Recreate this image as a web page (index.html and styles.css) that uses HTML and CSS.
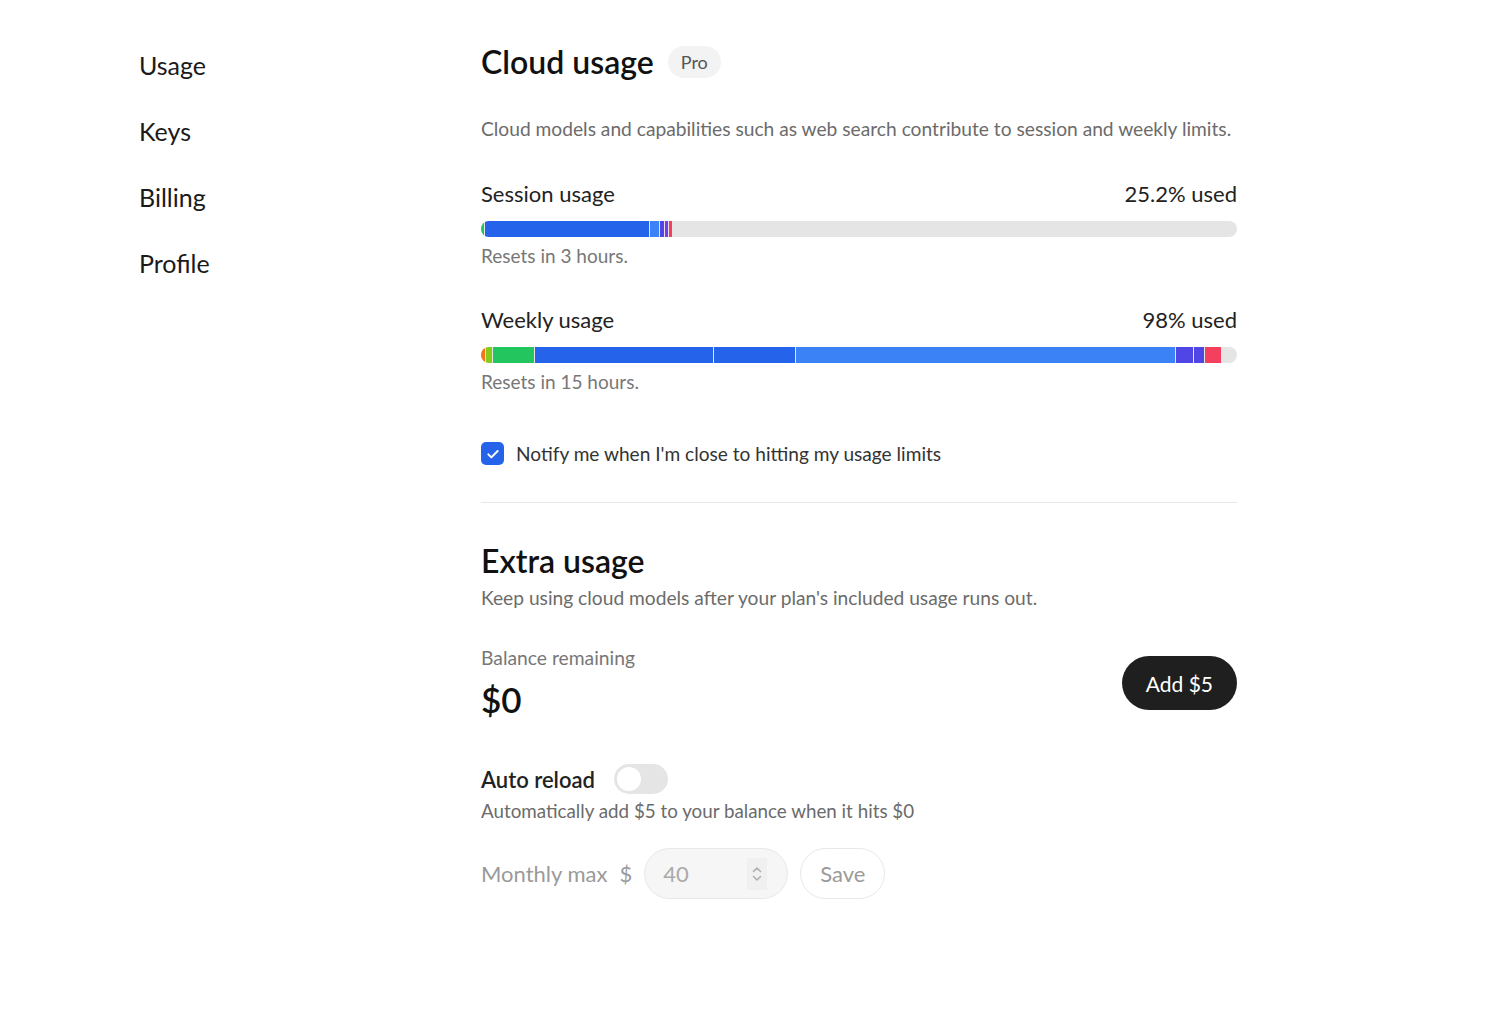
FILE: index.html
```html
<!DOCTYPE html>
<html lang="en">
<head>
    <meta charset="UTF-8">
    <title>Usage</title>
    <link rel="stylesheet" href="styles.css">
</head>
<body>
    <div class="pagina">
        <nav class="menu">
            <a href="#">Usage</a>
            <a href="#">Keys</a>
            <a href="#">Billing</a>
            <a href="#">Profile</a>
        </nav>

        <main class="contenido">
            <div class="titulo">
                <h1>Cloud usage</h1>
                <span class="insignia">Pro</span>
            </div>
            <p class="descripcion">Cloud models and capabilities such as web search contribute to session and weekly limits.</p>

            <section class="uso">
                <div class="uso-cabecera">
                    <span>Session usage</span>
                    <span>25.2% used</span>
                </div>
                <div class="barra">
                    <span class="verde" style="width: 3px"></span>
                    <span class="azul" style="width: 164px"></span>
                    <span class="celeste" style="width: 9px"></span>
                    <span class="indigo" style="width: 4px"></span>
                    <span class="violeta" style="width: 3px"></span>
                    <span class="rojo" style="width: 3px"></span>
                </div>
                <p class="nota">Resets in 3 hours.</p>
            </section>

            <section class="uso">
                <div class="uso-cabecera">
                    <span>Weekly usage</span>
                    <span>98% used</span>
                </div>
                <div class="barra">
                    <span class="naranja" style="width: 4px"></span>
                    <span class="lima" style="width: 6px"></span>
                    <span class="verde" style="width: 41px"></span>
                    <span class="azul" style="width: 178px"></span>
                    <span class="azul" style="width: 81px"></span>
                    <span class="celeste" style="width: 379px"></span>
                    <span class="indigo" style="width: 17px"></span>
                    <span class="indigo" style="width: 10px"></span>
                    <span class="rojo" style="width: 16px"></span>
                </div>
                <p class="nota">Resets in 15 hours.</p>
            </section>

            <label class="aviso">
                <span class="casilla">
                    <svg viewBox="0 0 24 24" width="16" height="16"><path d="M5 12.5l4.5 4.5L19 7.5" fill="none" stroke="#fff" stroke-width="3" stroke-linecap="round" stroke-linejoin="round"/></svg>
                </span>
                Notify me when I'm close to hitting my usage limits
            </label>

            <hr class="separador">

            <h2>Extra usage</h2>
            <p class="descripcion">Keep using cloud models after your plan's included usage runs out.</p>

            <div class="saldo">
                <div>
                    <p class="saldo-texto">Balance remaining</p>
                    <p class="saldo-valor">$0</p>
                </div>
                <button class="boton-negro">Add $5</button>
            </div>

            <div class="recarga">
                <span class="recarga-titulo">Auto reload</span>
                <span class="interruptor"><span></span></span>
            </div>
            <p class="descripcion recarga-texto">Automatically add $5 to your balance when it hits $0</p>

            <div class="maximo">
                <span>Monthly max</span>
                <span class="moneda">$</span>
                <div class="campo">
                    <span>40</span>
                    <span class="flechas">
                        <svg viewBox="0 0 16 24" width="16" height="24"><path d="M4.5 9.5L8 6l3.5 3.5M4.5 14.5L8 18l3.5-3.5" fill="none" stroke="#b0b0b0" stroke-width="1.6" stroke-linecap="round" stroke-linejoin="round"/></svg>
                    </span>
                </div>
                <button class="boton-claro">Save</button>
            </div>
        </main>
    </div>
</body>
</html>
```

FILE: styles.css
```css
body {
    font-family: "Lato", "Liberation Sans", sans-serif;
    background-color: #fff;
    color: #1a1a1a;
    margin: 0;
    padding: 0;
}

p {
    margin: 0;
}

.pagina {
    display: flex;
    padding: 44px 0 0 139px;
}

.menu {
    width: 342px;
    display: flex;
    flex-direction: column;
    gap: 36px;
    padding-top: 6px;
}

.menu a {
    color: #1a1a1a;
    text-decoration: none;
    font-size: 25px;
    line-height: 30px;
}

.contenido {
    width: 756px;
    display: flex;
    flex-direction: column;
}

.titulo {
    display: flex;
    align-items: center;
    gap: 14px;
}

h1, h2 {
    margin: 0;
    font-size: 32px;
    font-weight: 600;
    line-height: 36px;
    color: #111;
}

.insignia {
    background-color: #f3f3f3;
    color: #555;
    font-size: 18px;
    padding: 5px 13px;
    border-radius: 16px;
}

.descripcion {
    color: #6b6b6b;
    font-size: 19.2px;
    line-height: 26px;
}

.titulo + .descripcion {
    margin-top: 36px;
}

.uso {
    margin-top: 38px;
}

.uso + .uso {
    margin-top: 38px;
}

.uso-cabecera {
    display: flex;
    justify-content: space-between;
    font-size: 22px;
    line-height: 28px;
    color: #222;
}

.barra {
    display: flex;
    height: 16px;
    margin-top: 13px;
    background-color: #e5e5e5;
    border-radius: 8px;
    overflow: hidden;
    gap: 1px;
}

.barra span {
    height: 100%;
}

.verde { background-color: #22c55e; }
.azul { background-color: #2563eb; }
.celeste { background-color: #3b82f6; }
.indigo { background-color: #4f46e5; }
.violeta { background-color: #7c3aed; }
.rojo { background-color: #f43f5e; }
.naranja { background-color: #f97316; }
.lima { background-color: #84cc16; }

.nota {
    color: #777;
    font-size: 19px;
    line-height: 24px;
    margin-top: 7px;
}

.aviso {
    display: flex;
    align-items: center;
    gap: 12px;
    margin-top: 48px;
    font-size: 19.1px;
    color: #333;
}

.casilla {
    width: 23px;
    height: 23px;
    background-color: #2563eb;
    border-radius: 5px;
    display: flex;
    align-items: center;
    justify-content: center;
}

.separador {
    width: 100%;
    border: none;
    border-top: 1px solid #e8e8e8;
    margin: 37px 0 40px;
}

h2 + .descripcion {
    margin-top: 6px;
}

.saldo {
    display: flex;
    justify-content: space-between;
    align-items: center;
    margin-top: 34px;
}

.saldo-texto {
    color: #777;
    font-size: 19.3px;
    line-height: 26px;
}

.saldo-valor {
    font-size: 35px;
    font-weight: 600;
    line-height: 44px;
    margin-top: 6px;
    color: #111;
}

.boton-negro {
    font-family: inherit;
    background-color: #1f1f1f;
    color: white;
    font-size: 21px;
    border: none;
    border-radius: 27px;
    height: 54px;
    padding: 0 24px;
    cursor: pointer;
}

.recarga {
    display: flex;
    align-items: center;
    gap: 19px;
    margin-top: 43px;
}

.recarga-titulo {
    font-size: 22px;
    font-weight: 600;
    color: #222;
}

.recarga + .descripcion {
    margin-top: 4px;
}

.recarga-texto {
    font-size: 18.8px;
}

.interruptor {
    width: 54px;
    height: 30px;
    background-color: #e5e5e5;
    border-radius: 15px;
    position: relative;
}

.interruptor span {
    position: absolute;
    top: 3px;
    left: 3px;
    width: 24px;
    height: 24px;
    border-radius: 50%;
    background-color: white;
}

.maximo {
    display: flex;
    align-items: center;
    margin-top: 24px;
    font-size: 22px;
    color: #9a9a9a;
}

.moneda {
    margin: 0 12px 0 12px;
}

.campo {
    width: 144px;
    height: 51px;
    box-sizing: border-box;
    border: 1px solid #e8e8e8;
    background-color: #f6f6f6;
    border-radius: 26px;
    display: flex;
    align-items: center;
    justify-content: space-between;
    padding: 0 20px 0 18px;
    color: #aaa;
}

.flechas {
    display: flex;
    align-items: center;
    justify-content: center;
    width: 20px;
    height: 32px;
    background-color: #f0f0f0;
}

.boton-claro {
    font-family: inherit;
    margin-left: 12px;
    height: 51px;
    padding: 0 19px;
    background-color: white;
    border: 1px solid #e8e8e8;
    border-radius: 26px;
    font-size: 22px;
    color: #9a9a9a;
}
```
